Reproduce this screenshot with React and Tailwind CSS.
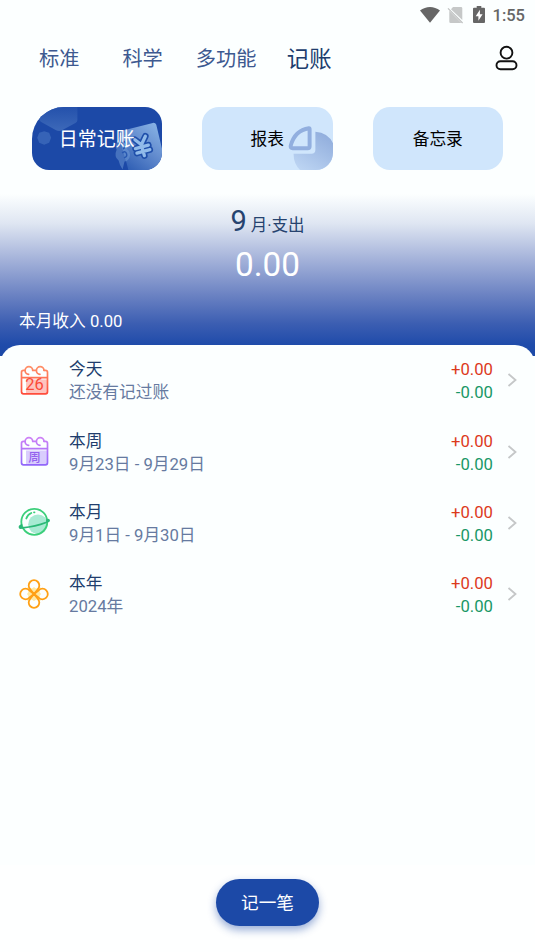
import React, { useState } from 'react';

const tabs = [
  { label: '标准', className: 'ml-[39px] text-[20.2px] text-[#3d5990]' },
  { label: '科学', className: 'ml-[43px] text-[20.2px] text-[#3d5990]' },
  { label: '多功能', className: 'ml-[33px] text-[20.2px] text-[#3d5990]' },
  { label: '记账', className: 'ml-[30.5px] text-[22.3px] text-[#203d6d]' },
];

const StatusBar = () => (
  <div className="flex h-[30px] items-center justify-end pr-[10px] text-[#666]">
    <svg className="h-[18px] w-[22px]" viewBox="0 0 22 18" fill="currentColor">
      <path d="M1 4.6C7-.3 15-.3 21 4.6L11 16.8z" />
    </svg>
    <svg className="ml-[6px] h-[18px] w-[17px]" viewBox="0 0 17 18">
      <path d="M6 1h8q1.3 0 1.3 1.3V14L4 3.2zM2.3 4.8 14.4 17H3.6q-1.3 0-1.3-1.3z" fill="#c6c8c8" />
      <path d="M1 2.3 15.6 17" stroke="#bfc1c1" strokeWidth="1.2" />
    </svg>
    <svg className="ml-[9px] h-[18px] w-[12px]" viewBox="0 0 12 18">
      <path d="M3.7 0h4.6v1.8H11q1 0 1 1V16q0 1-1 1H1q-1 0-1-1V2.8q0-1 1-1h2.7z" fill="#666" />
      <path d="M6.9 3.8 2.7 10.2h2.7v4.6l4.2-6.5H6.9z" fill="#fff" />
    </svg>
    <span className="ml-[8px] pt-px text-[16.5px] font-medium leading-[20px]">1:55</span>
  </div>
);

const UserIcon = () => (
  <svg className="h-[26px] w-[24px]" viewBox="0 0 24 26" fill="none" stroke="#111" strokeWidth="1.9">
    <circle cx="12.5" cy="7.7" r="5.9" />
    <rect x="2.5" y="16.2" width="20" height="8" rx="4" />
  </svg>
);

const yen = 'm103.5 33 6.5 5 4-8.5m-10 12.5 13-3.5m-11.5 8 13-3.5m-8.5-4.5 3 10.5';

const MoneyArt = () => (
  <svg className="absolute inset-0 h-full w-full" viewBox="0 0 131 64">
    <defs>
      <linearGradient id="hexagon" x1="0" y1="0" x2="0" y2="1">
        <stop offset="0" stopColor="#2653ad" />
        <stop offset="1" stopColor="#4571bd" />
      </linearGradient>
      <linearGradient id="note" x1="1" y1="0" x2="0.3" y2="1">
        <stop offset="0" stopColor="#8db8e8" />
        <stop offset=".5" stopColor="#668fd0" />
        <stop offset="1" stopColor="#3362b6" />
      </linearGradient>
    </defs>
    <path d="M7 0H45.500V13q0 2-2 3L30 23.500q-3 1.500-6 0L9 15q-2-1-2-3z" fill="url(#hexagon)" opacity=".8" />
    <path d="m7 26 5-1.500 5 1.500 2 5-2 5-5 2-5-2-2-5z" fill="#416fbd" opacity=".7" />
    <path d="m88.500 24.500 33-8.500q2.500-.5 3.500 2l6 25v15q-1 3-6 6H97q-2-8-4-14l-5-19z" fill="url(#note)" />
    <path d="M86 34q2-6 8-6 6 2 5 9-1 4-4 5 5 3 3 9-2 4-5 4l-2 8q-3-4-4-9-5-4-2-11-2-4 1-9z" fill="#79a5dc" opacity=".45" />
    <path d="M90 37q2-4 4-1t-2 6M91 46q3-2 4 1t-2 4" fill="none" stroke="#2858b1" strokeWidth="1.5" strokeLinecap="round" />
    <g fill="none" strokeLinecap="round" strokeLinejoin="round">
      <path d={yen} stroke="#1f4faa" strokeWidth="6.6" />
      <path d={yen} stroke="#91bbea" strokeWidth="3.3" />
    </g>
  </svg>
);

const ChartArt = () => (
  <svg className="absolute inset-0 h-full w-full" viewBox="0 0 131 64">
    <defs>
      <linearGradient id="pie" x1=".9" y1="0" x2=".3" y2="1">
        <stop offset="0" stopColor="#8eabdb" />
        <stop offset="1" stopColor="#bdd5f3" />
      </linearGradient>
    </defs>
    <path d="M114 25q13 1 18 12v22q-4 6-9 8h-20q-11-7-11-20h18q4 0 4-4z" fill="url(#pie)" />
    <path d="M107.500 21.500q-14 2-18.300 17.300-.6 2.700 2 2.700h15q2 0 2-2V22.500q0-1-.7-1z" fill="none" stroke="#92afdf" strokeWidth="4" />
  </svg>
);

const Calendar = ({ id, from, to, children }) => (
  <svg className="h-[32px] w-[32px]" viewBox="0 0 32 32" fill="none">
    <defs>
      <linearGradient id={id} x1="0" y1="2" x2="0" y2="30" gradientUnits="userSpaceOnUse">
        <stop offset="0" stopColor={from} />
        <stop offset="1" stopColor={to} />
      </linearGradient>
    </defs>
    <path d="M8 15.5h21V30H8z" fill={to} opacity=".33" />
    <g stroke={`url(#${id})`} strokeWidth="1.7" strokeLinecap="round" strokeLinejoin="round">
      <path d="M7 6.300H5.500q-2 0-2 2v19.500q0 2 2 2h22q2 0 2-2V8.300q0-2-2-2H26M14.700 6.300h3.600M3.500 13.700h26" />
      <path d="M10.700 10.300A3.800 3.800 0 1 1 14.700 6.300M22 10.300A3.800 3.800 0 1 1 26 6.300" />
    </g>
    {children}
  </svg>
);

const Planet = () => (
  <svg className="h-[32px] w-[32px]" viewBox="0 0 32 32" fill="none" stroke="#3bcf7a" strokeWidth="1.8" strokeLinecap="round">
    <circle cx="20" cy="18.3" r="9.8" fill="#a8ead3" stroke="none" />
    <circle cx="16.3" cy="15.8" r="13" />
    <path d="M8.3 12.5q1.3-4 5-5.500M16 6.300h.5" />
    <path d="M3.500 18.800q-3 3.200 1 3 13-1.200 23.500-5.300 4.500-2.500 1-2.300" stroke="#2bb877" />
    <circle cx="2.5" cy="21" r="1" fill="#2bb877" stroke="#2bb877" />
    <circle cx="30.2" cy="14.5" r=".8" fill="#2bb877" stroke="#2bb877" />
  </svg>
);

const petal = 'M16 16 19.800 11.200A5.300 5.300 0 1 0 12.200 11.200z';

const Flower = () => (
  <svg className="h-[32px] w-[32px] overflow-visible" viewBox="0 0 32 32" fill="none" stroke="#ffa014" strokeWidth="1.8" strokeLinejoin="round">
    <path d="M9 9q4 3 7 0 3 3 7 0-3 4 0 7-3 3 0 7-4-3-7 0-3-3-7 0 3-4 0-7 3-3 0-7z" fill="#ffe9a3" stroke="none" />
    <path d={petal} />
    <path d={petal} transform="rotate(90 16 16)" />
    <path d={petal} transform="rotate(180 16 16)" />
    <path d={petal} transform="rotate(270 16 16)" />
  </svg>
);

const records = [
  {
    title: '今天',
    detail: '还没有记过账',
    icon: (
      <Calendar id="today" from="#ff9068" to="#ff4c3b">
        <text x="16.5" y="26" textAnchor="middle" fill="#fb4a38" className="text-[16.5px]">26</text>
      </Calendar>
    ),
  },
  {
    title: '本周',
    detail: '9月23日 - 9月29日',
    icon: (
      <Calendar id="week" from="#cf82f6" to="#9167fa">
        <text x="16.5" y="26.5" textAnchor="middle" fill="#9463ee" className="text-[12.5px] font-medium">周</text>
      </Calendar>
    ),
  },
  { title: '本月', detail: '9月1日 - 9月30日', icon: <Planet /> },
  { title: '本年', detail: '2024年', icon: <Flower /> },
];

const App = () => {
  const [active, setActive] = useState('日常记账');

  return (
    <div lang="zh-CN" className="flex h-[952px] w-[535px] flex-col overflow-hidden bg-[#fcffff] font-['Roboto','Noto_Sans_CJK_SC',sans-serif] text-[16.7px] whitespace-nowrap">
      <StatusBar />

      <header className="flex h-[57px] shrink-0 items-center">
        {tabs.map((tab) => (
          <button key={tab.label} className={`${tab.className} pt-[2px]`}>{tab.label}</button>
        ))}
        <button className="mr-[17px] mb-px ml-auto" aria-label="用户"><UserIcon /></button>
      </header>

      <nav className="mt-[19.5px] ml-[31.5px] flex h-[63.5px] shrink-0 gap-[40px] text-black">
        <button
          onClick={() => setActive('日常记账')}
          className="relative w-[130.5px] overflow-hidden rounded-[17px] rounded-tl-[32px] bg-[#1c49a7] pt-[3px] text-[19px] text-white"
        >
          <MoneyArt />
          <span className="relative">日常记账</span>
        </button>
        <button onClick={() => setActive('报表')} className="relative w-[130.5px] overflow-hidden rounded-[17px] bg-[#d0e6fc] pt-[3px]">
          <ChartArt />
          <span className="relative">报表</span>
        </button>
        <button onClick={() => setActive('备忘录')} className="w-[130.5px] rounded-[17px] bg-[#d0e6fc] pt-[3px]">备忘录</button>
      </nav>

      <section className="mt-[24px] flex h-[162px] shrink-0 flex-col bg-[linear-gradient(#fcffff,#dfe6f2_18%,#a5b3da_40%,#6c83c3_62%,#3c5eb2_80%,#1f4baa_93%,#1c49a7)]">
        <div className="mt-[8px] flex h-[38px] items-baseline justify-center text-[#26436f]">
          <span className="text-[29px] leading-[38px]">9</span>
          <span className="ml-[4px] text-[16.5px]">月·支出</span>
        </div>
        <div className="mt-[2px] h-[46px] text-center text-[33.3px] leading-[46px] text-white">0.00</div>
        <div className="mt-[22px] ml-[19px] leading-[24px] text-white">本月收入 0.00</div>
      </section>

      <main className="-mt-[11.5px] flex-1 rounded-t-[20px] bg-[#fcffff]">
        {records.map((record) => (
          <div key={record.title} className="flex h-[71.4px] items-center pr-[17px] pl-[18px] leading-[23px]">
            <div className="mb-px">{record.icon}</div>
            <div className="mt-[2px] ml-[19px] flex-1">
              <div className="text-[#203d6d]">{record.title}</div>
              <div className="text-[#667aa0]">{record.detail}</div>
            </div>
            <div className="mt-[2px] text-right">
              <div className="text-[#dc391c]">+0.00</div>
              <div className="text-[#189866]">-0.00</div>
            </div>
            <svg className="ml-[13px] h-[16px] w-[12px]" viewBox="0 0 12 16" fill="none" stroke="#c5c7c8" strokeWidth="1.8">
              <path d="m2.5 2 7 6-7 6" />
            </svg>
          </div>
        ))}
      </main>

      <footer className="flex h-[87px] shrink-0 justify-center bg-[#feffff] pt-[14px]">
        <button className="h-[47px] w-[103px] rounded-full bg-[#1c49a7] pt-[2px] text-[17.6px] text-white shadow-[0_4px_9px_rgba(28,73,167,0.45)]">记一笔</button>
      </footer>
    </div>
  );
};

export default App;
